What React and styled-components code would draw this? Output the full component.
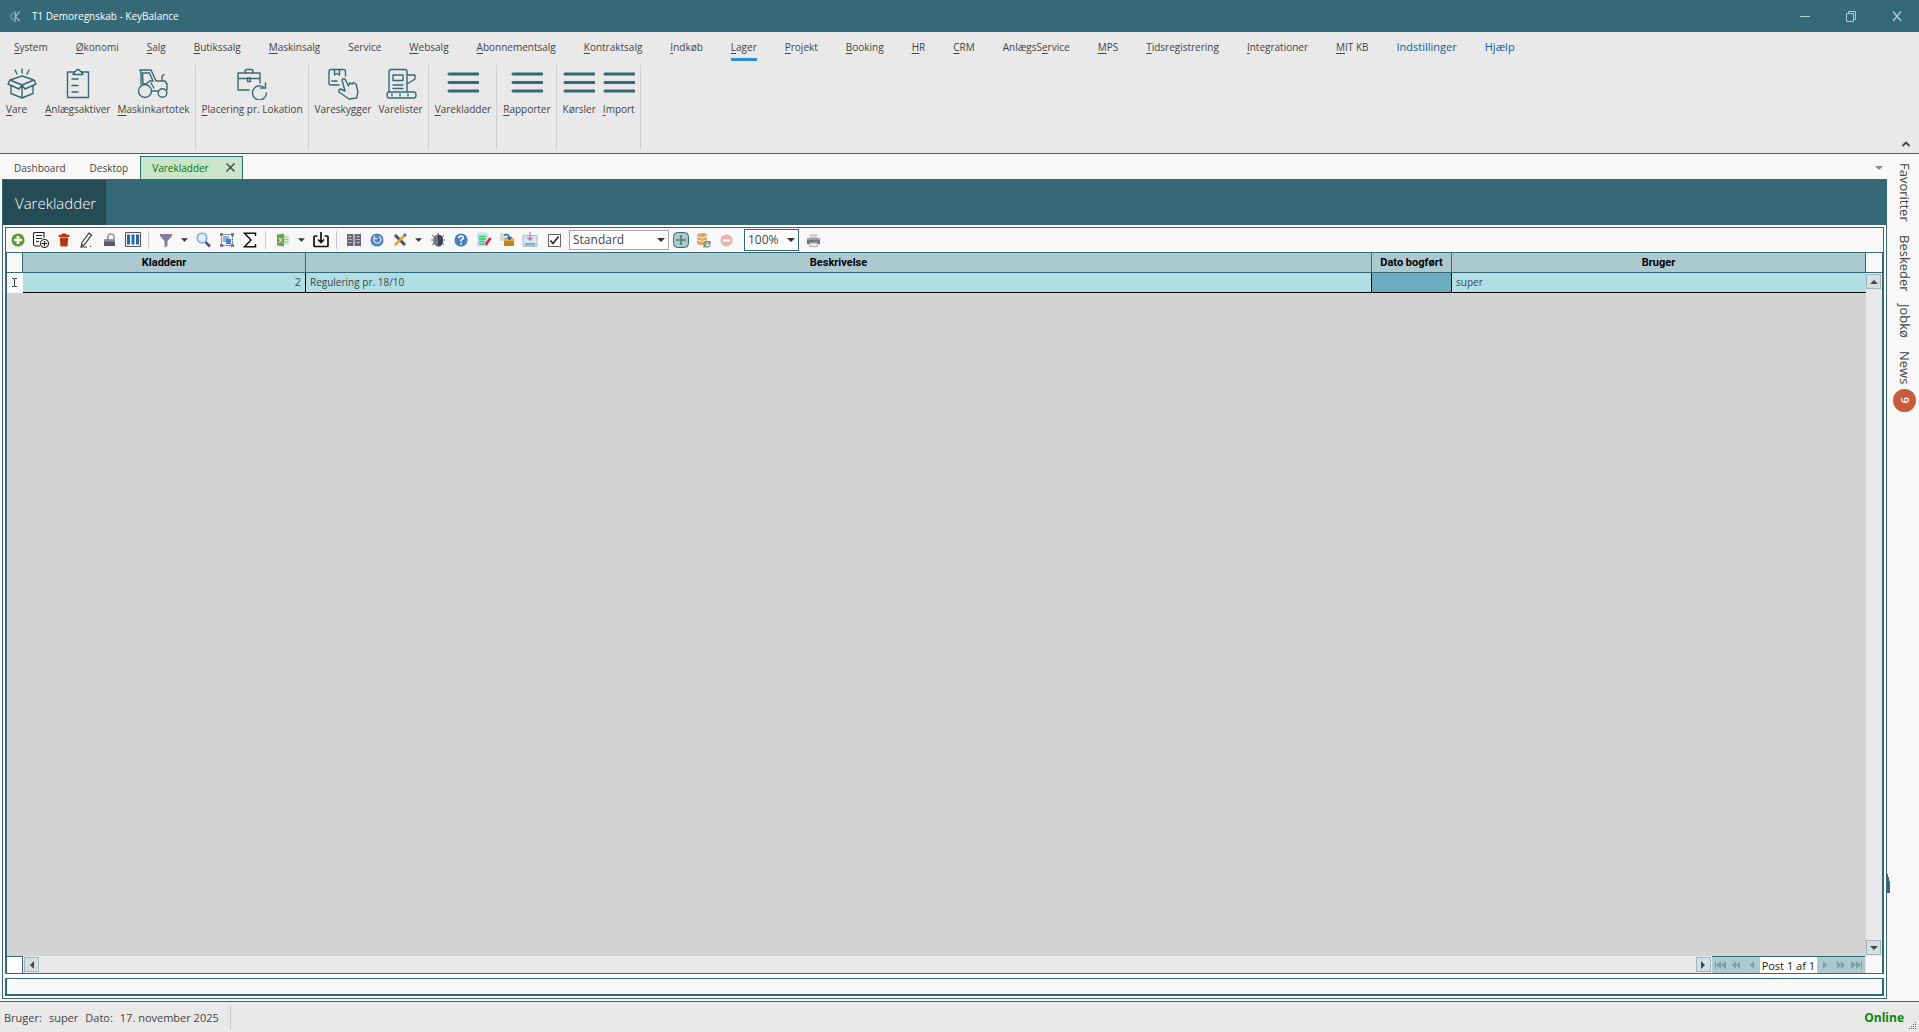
import React from "react";
import styled, { createGlobalStyle, css } from "styled-components";

const teal = "#356977";
const ink = "#444444";
const panel = "#e9e9e9";
const light = "#f8f8f8";
const headFill = "#acc9d0";
const fontStack = '"Open Sans", "Noto Sans", sans-serif';

const GlobalStyle = createGlobalStyle`
  * { box-sizing: border-box; }
  body { margin: 0; background: ${light}; color: ${ink}; font: 11px/16px ${fontStack}; }
  button, select, input { font: inherit; color: inherit; margin: 0; padding: 0; }
  button { border: 0; background: none; }
  svg { display: block; flex: none; }
`;

const Window = styled.div`
  display: flex;
  flex-direction: column;
  height: 100vh;
  overflow: hidden;
`;

const TitleBar = styled.header`
  display: flex;
  align-items: center;
  height: 32px;
  flex: none;
  padding: 0 4px 0 9px;
  gap: 10px;
  background: ${teal};
  color: #fff;
  font: 10px/16px ${fontStack};
`;
const TitleText = styled.h1`
  margin: 0;
  flex: 1;
  font: inherit;
`;
const WindowButton = styled.button`
  display: flex;
  align-items: center;
  justify-content: center;
  width: 36px;
  height: 32px;
  color: #b5cbd1;
`;

const Ribbon = styled.section`
  display: flex;
  flex-direction: column;
  flex: none;
  height: 122px;
  background: ${panel};
  border-bottom: 1px solid ${teal};
  font: 10px/16px ${fontStack};
`;
const Menu = styled.nav`
  display: flex;
  gap: 28px;
  padding: 6px 0 0 14px;
`;
const MenuItem = styled.button`
  height: 23px;
  padding-bottom: 2px;
  white-space: nowrap;
  font-size: ${(p) => (p.$blue ? 11 : 10)}px;
  color: ${(p) => (p.$blue ? "#0a5ca8" : ink)};
  border-bottom: 3px solid ${(p) => (p.$active ? "#2c8bdc" : "transparent")};
`;
const Key = styled.span`
  text-decoration: underline;
  text-underline-offset: 2px;
`;
const RibbonBody = styled.div`
  display: flex;
  flex: 1;
  padding: 4px 0;
`;
const RibbonGroup = styled.div`
  display: flex;
  gap: 7px;
  align-items: flex-start;
  padding: 3px 5px 0 6px;
  border-right: 1px solid #cdcdcd;
`;
const RibbonButton = styled.button`
  display: flex;
  flex-direction: column;
  align-items: ${(p) => (p.$start ? "flex-start" : "center")};
  min-width: 32px;
  gap: 1px;
  white-space: nowrap;
  color: ${ink};
  svg { color: ${teal}; }
`;
const Collapse = styled.button`
  align-self: flex-end;
  margin-left: auto;
  padding: 0 8px 0 0;
  color: ${ink};
`;

const Body = styled.div`
  display: flex;
  flex: 1;
  min-height: 0;
`;
const Main = styled.main`
  display: flex;
  flex-direction: column;
  flex: 1;
  min-width: 0;
  padding: 0 0 2px 2px;
`;
const Tabs = styled.div`
  display: flex;
  align-items: flex-end;
  height: 25px;
  flex: none;
  font: 10px/16px ${fontStack};
`;
const Tab = styled.button`
  display: flex;
  align-items: center;
  height: 23px;
  padding: 0 12px;
  ${(p) =>
    p.$active &&
    css`
      height: 24px;
      margin-bottom: -1px;
      padding: 0 7px 2px 11px;
      gap: 17px;
      border: 1px solid ${teal};
      border-bottom: 0;
      background: #c9e6c9;
      color: #0a6e0a;
      position: relative;
    `}
`;
const TabList = styled.button`
  margin-left: auto;
  padding: 0 4px 9px;
  color: #888;
`;
const Frame = styled.section`
  position: relative;
  display: flex;
  flex-direction: column;
  flex: 1;
  min-height: 0;
  border: 1px solid ${teal};
  background: #fff;
`;
const Band = styled.div`
  display: flex;
  height: 45px;
  flex: none;
  background: ${teal};
`;
const BandTitle = styled.h2`
  margin: 0;
  padding: 0 10px 0 12px;
  background: #254b54;
  color: #fff;
  font: 300 15px/47px ${fontStack};
`;
const Content = styled.div`
  display: flex;
  flex-direction: column;
  flex: 1;
  min-height: 0;
  margin: 2px;
`;
const Toolbar = styled.div`
  display: flex;
  align-items: center;
  height: 25px;
  flex: none;
  border: 1px solid ${teal};
  border-bottom: 0;
  background: ${light};
`;
const Tool = styled.button`
  display: flex;
  align-items: center;
  justify-content: center;
  width: ${(p) => (p.$caret ? 15 : 23)}px;
  height: 22px;
`;
const Divider = styled.span`
  width: 1px;
  height: 18px;
  margin: 0 5px 0 4px;
  background: #c8c8c8;
`;
const CheckLabel = styled.label`
  display: flex;
  align-items: center;
  justify-content: center;
  width: 23px;
  margin-left: 2px;
`;
const CheckInput = styled.input`
  appearance: none;
  width: 13px;
  height: 13px;
  border: 1px solid #666;
  background: #fff;
`;
const CheckWrap = styled.span`
  position: relative;
  display: flex;
  svg {
    position: absolute;
    left: 1px;
    top: 1px;
    pointer-events: none;
  }
`;
const Combo = styled.span`
  position: relative;
  display: flex;
  width: ${(p) => (p.$small ? 55 : 100)}px;
  height: ${(p) => (p.$small ? 22 : 20)}px;
  margin: ${(p) => (p.$small ? "0 3px 0 6px" : "0 0 0 3px")};
  select {
    appearance: none;
    width: 100%;
    padding: 0 4px 0 3px;
    border: 1px solid ${(p) => (p.$small ? teal : "#a8a8a8")};
    border-radius: 0;
    background: #fff;
    font-size: 12px;
  }
  svg {
    position: absolute;
    right: 4px;
    top: 50%;
    margin-top: -2px;
    pointer-events: none;
  }
`;

const GridBox = styled.div`
  display: grid;
  grid-template-columns: 1fr 16px;
  grid-template-rows: 1fr 17px;
  flex: 1;
  min-height: 0;
  border: 2px solid ${teal};
  border-width: 1px 2px;
`;
const Sheet = styled.div`
  min-width: 0;
  background: #d3d3d3;
`;
const Table = styled.table`
  width: 100%;
  table-layout: fixed;
  border-collapse: separate;
  border-spacing: 0;
  font-size: 10px;
  line-height: 14px;
  th, td {
    height: 20px;
    padding: 0 4px;
    overflow: hidden;
    white-space: nowrap;
  }
  th {
    background: ${headFill};
    border-right: 1px solid ${teal};
    border-bottom: 1px solid ${teal};
    color: #000;
    font: bold 11px/14px Roboto, "Open Sans", sans-serif;
  }
  th:first-child { background: ${light}; }
  td {
    padding-bottom: 2px;
    background: #afdfe4;
    border-right: 1px solid #000;
    border-bottom: 1px solid #000;
  }
  td:first-child {
    padding: 0;
    border-color: #fff;
    background: #fff;
  }
  td:last-child { border-right: 0; }
`;
const NumberCell = styled.td`
  text-align: right;
  font-size: 11px;
`;
const CurrentCell = styled.td`&& { background: #6aadc0; }`;
const VScroll = styled.div`
  display: flex;
  flex-direction: column;
  justify-content: space-between;
  align-items: flex-start;
  padding-bottom: 1px;
  background: ${panel};
`;
const HeadCorner = styled.div`
  width: 16px;
  height: 20px;
  margin-bottom: 1px;
  background: ${light};
  border-bottom: 1px solid ${teal};
`;
const ScrollButton = styled.button`
  display: flex;
  align-items: center;
  justify-content: center;
  width: 15px;
  height: 15px;
  background: #d4e0e3;
  border: 1px solid #a1b5ba;
`;
const HScroll = styled.div`
  display: flex;
  align-items: center;
  background: ${panel};
  gap: 1px;
`;
const RowCorner = styled.span`
  width: 16px;
  height: 17px;
  background: #fff;
  border: solid ${teal};
  border-width: 1px 1px 0 0;
`;
const Spacer = styled.span`flex: 1;`;
const Navigator = styled.div`
  display: flex;
  align-items: stretch;
  height: 17px;
  margin-right: 1px;
  border-top: 1px solid ${teal};
  background: ${headFill};
  color: #7f9da5;
`;
const NavButton = styled.button`
  display: flex;
  align-items: center;
  justify-content: center;
  width: 16px;
`;
const Position = styled.span`
  padding: 0 2px;
  background: #fff;
  color: #222;
  font: 11px/18px ${fontStack};
`;
const Corner = styled.div`background: ${light};`;
const MessageBox = styled.div`
  height: 18px;
  flex: none;
  margin-top: 4px;
  border: 2px solid ${teal};
  border-top-width: 1px;
  background: ${light};
`;
const Sliver = styled.svg`
  position: absolute;
  left: 100%;
  bottom: 105px;
  margin-left: 1px;
`;

const Side = styled.aside`
  display: flex;
  flex-direction: column;
  align-items: center;
  width: 32px;
  flex: none;
  padding-top: 9px;
  padding-left: 3px;
  gap: 13px;
`;
const SideButton = styled.button`
  display: flex;
  align-items: center;
  gap: 4px;
  writing-mode: vertical-rl;
  font: 13px/18px ${fontStack};
`;
const Badge = styled.span`
  display: flex;
  align-items: center;
  justify-content: center;
  width: 23px;
  height: 23px;
  border-radius: 50%;
  background: #c75b3d;
  color: #fff;
  font-size: 11px;
  font-weight: 600;
`;

const Status = styled.footer`
  display: flex;
  align-items: center;
  height: 31px;
  flex: none;
  padding-top: 1px;
  border-top: 1px solid ${teal};
  background: ${panel};
`;
const StatusText = styled.div`
  display: flex;
  align-items: center;
  gap: 7px;
  height: 24px;
  padding: 0 11px 0 4px;
  border-right: 1px solid #c8c8c8;
`;
const Online = styled.strong`
  margin-left: auto;
  padding-right: 5px;
  color: #0a850a;
  font-size: 12px;
`;
const Grip = styled.svg`align-self: flex-end; margin: 0 2px 2px 0;`;

const Icon = ({ size = 16, box = 16, children, ...rest }) => (
  <svg width={size} height={size} viewBox={`0 0 ${box} ${box}`} fill="none" stroke="currentColor" aria-hidden="true" {...rest}>
    {children}
  </svg>
);
const Caret = ({ w = 7, h = 4, color = "#333" }) => (
  <svg width={w} height={h} viewBox="0 0 8 4" aria-hidden="true"><path d="M0 0h8L4 4z" fill={color} /></svg>
);

const big = { size: 32, box: 32, strokeWidth: 1.4, strokeLinejoin: "round", strokeLinecap: "round" };
const Lines = () => (
  <Icon {...big} strokeWidth="3"><path d="M2 6h29M2 14.500h29M2 23h29" /></Icon>
);
const BoxIcon = () => (
  <Icon {...big}><path d="M16 1v4M9 2l2 4M23 2l-2 4M4 12l12-4 12 4-12 5zM4 12l-2 4 11 5 3-4 3 4 11-5-2-4M5 17.500v8l11 4.500 11-4.500v-8M16 17v13" /></Icon>
);
const ClipboardIcon = () => (
  <Icon {...big}><path d="M12 4H5.500v25.500h21V4H20M11 6.500l2-3c1.500 0 1-2 3-2s1.500 2 3 2l2 3zM10 11h6M10 17.500h6M10 24h6" /></Icon>
);
const TractorIcon = () => (
  <Icon {...big}><circle cx="8" cy="23" r="6.500" /><circle cx="25.500" cy="25" r="4.300" /><path d="M3 2h11l5 11h9l2 3v6M3 2l1 3v11M5.500 5h7l3.500 8h-3.500L9 16H6zM15 23h6M25 13V8.500l2-2M14 15l3 5" /></Icon>
);
const CaseIcon = () => (
  <Icon {...big}><path d="M13 22H2V5h22v10M2 10.500h22M9 5V3q0-1.500 1.500-1.500h5Q17 1.500 17 3v2M11.500 10h3v3.500h-3zM28 19.500A7 7 0 1 0 30.500 25M29.500 15v5h-5" /></Icon>
);
const HandIcon = () => (
  <Icon {...big}><path d="M12 17H4q-2 0-2-2V3.500q0-2 2-2h12.500q2 0 2 2V8M7.500 1.500V7l2.500-1.500L12.500 7V1.500M5 13h5M15 12q2-3 4 1l2.500 5 1-3 3 1 1-1.500 2.500 1.500 2 8-1.500 6-7.500 1-10-7q-1-2.500 1.500-3l4.500 2z" /></Icon>
);
const MachineIcon = () => (
  <Icon {...big}><path d="M4 24V3.500q0-2 2-2h14q2 0 2 2V24M8 7h10v5.500H8zM8 17h10M8 20.500h10M22 7h8v4l-8 5M4 24h25q2 0 2 3t-2 3H4q-2 0-2-3t2-3zM7 26v2M15 26v2M23 26v2" /></Icon>
);

const PlusIcon = () => (
  <Icon size="14"><circle cx="8" cy="8" r="7.500" fill="#5d9b33" stroke="none" /><path d="M8 3.500v9M3.500 8h9" stroke="#fff" strokeWidth="3" /></Icon>
);
const DocAddIcon = () => (
  <Icon stroke="#222" strokeWidth="1.100"><path d="M7 14H2q-1.500 0-1.500-1.500V2Q.500.500 2 .500h9V6M3 3.500h6M3 6.500h6M3 9.500h3" /><circle cx="11.500" cy="11.500" r="4" /><path d="M11.500 9v5M9 11.500h5" /></Icon>
);
const TrashIcon = () => (
  <Icon size="14" stroke="none"><path d="M2 2h3.500V.500h5V2H14v2.500H2z" fill="#b8330c" /><path d="M3 5h10l-1 10.500H4z" fill="#c84418" /><path d="M5.500 6v8M8 6v8M10.500 6v8" stroke="#8d2608" /></Icon>
);
const PenIcon = () => (
  <Icon stroke="#333" strokeWidth="1.200"><path d="M3 10.500L10 1l2.500 2-7 9.500L2.500 14zM1 15h7M11 14.500h1" /></Icon>
);
const LockIcon = () => (
  <Icon stroke="none"><path d="M6 8V5q0-3 3-3t3 3v2" stroke="#aaa" strokeWidth="2" /><path d="M2 7.500h11V14H2z" fill="#5b5b68" /><path d="M2 7.500h11v2H2z" fill="#9393a0" /></Icon>
);
const ColumnsIcon = () => (
  <Icon stroke="#555"><path d="M.500.500h15v14H.500z" fill="#f4f7fa" /><path d="M3.500 2.500v10M8 2.500v10M12.500 2.500v10" stroke="#2f66a3" strokeWidth="3" /></Icon>
);
const FunnelIcon = () => <Icon stroke="none"><path d="M2 2h12v2L9.500 9v5l-3 1.500V9L2 4z" fill="#857aa0" /></Icon>;
const SearchIcon = () => (
  <Icon><path d="M9.500 10l4.500 4.500" stroke="#50505e" strokeWidth="2.500" /><circle cx="6" cy="6" r="4.700" fill="#e4f0ff" stroke="#7ba7dc" strokeWidth="1.600" /></Icon>
);
const GroupIcon = () => (
  <Icon stroke="#60618c"><path d="M2.500 2.500h11v11h-11z" strokeDasharray="2 1" /><path d="M1 1h3v3H1zM12 1h3v3h-3zM1 12h3v3H1zM12 12h3v3h-3z" fill="#77789b" stroke="none" /><path d="M4 4h6v6H4z" fill="#8fb1ea" stroke="none" /><path d="M7 7h5v5H7z" fill="#477fd0" stroke="none" /></Icon>
);
const SigmaIcon = () => <Icon stroke="#111" strokeWidth="1.500"><path d="M13.500 4V1.200H2.500L9 8l-6.500 6.800h11V12" /></Icon>;
const ExcelIcon = () => (
  <Icon stroke="none"><path d="M8 3h6v10H8z" fill="#dce9d2" /><path d="M9 5h4M9 7.500h4M9 10h4" stroke="#a9c598" /><path d="M2 2.500l7-1v13l-7-1z" fill="#6fa14f" /><path d="M4 6l3 4.500M7 6l-3 4.500" stroke="#e7f3df" /></Icon>
);
const DownloadIcon = () => (
  <Icon stroke="#111" strokeWidth="1.700"><path d="M4.500 4H2Q1 4 1 5v8.500q0 1 1 1h12q1 0 1-1V5q0-1-1-1h-2.500M8 0v10M5 7.500l3 3 3-3" /></Icon>
);
const BookIcon = () => (
  <Icon stroke="none"><path d="M1 2h6.500v12H1zM8.500 2H15v12H8.500z" fill="#6d697c" /><path d="M2 4.500h4M2 7.500h4M2 10.500h4M10 4.500h4M10 7.500h4M10 10.500h4" stroke="#b5b2bf" /></Icon>
);
const RefreshIcon = () => (
  <Icon size="14"><circle cx="8" cy="8" r="7.500" fill="#4e86c4" stroke="none" /><path d="M5 5.500a4 4 0 1 0 5-1.500M5 3v3.500h3.500" stroke="#d5e5f7" strokeWidth="1.500" /></Icon>
);
const ToolsIcon = () => (
  <Icon><path d="M3 3l10 10" stroke="#4d4d5b" strokeWidth="2.800" /><path d="M13 3L3 13" stroke="#dba43d" strokeWidth="2.500" /><path d="M12 4l2-2" stroke="#757585" strokeWidth="3" /></Icon>
);
const BugIcon = () => (
  <Icon><path d="M2 3l3 3M14 3l-3 3M1 8h14M2 13l3-3M14 13l-3-3M8 1v3" stroke="#666" /><ellipse cx="8" cy="8.500" rx="5" ry="6" fill="#77778a" stroke="none" /><path d="M8 2.500q5 0 5 6t-5 6z" fill="#3f3f54" stroke="none" /></Icon>
);
const HelpIcon = () => (
  <Icon size="14"><circle cx="8" cy="8" r="7.500" fill="#4a7fbd" stroke="none" /><path d="M5.500 6q0-2.500 2.500-2.500T10.500 6Q10.500 7 8 8.500v1.300M8 11v2" stroke="#fff" strokeWidth="1.800" /></Icon>
);
const EditDocIcon = () => (
  <Icon stroke="none"><path d="M1 .500h9L12.500 3v11.500H1z" fill="#bfe9f2" /><path d="M3 4.500h7M3 7h7M3 9.500h6M3 12h5" stroke="#36c85e" strokeWidth="1.500" /><path d="M9.500 13l5-7" stroke="#e0263b" strokeWidth="2.600" /></Icon>
);
const PackageIcon = () => (
  <Icon stroke="none"><path d="M1 1h6v8H1z" fill="#d5d8df" /><path d="M5 8h10v6H5z" fill="#c28222" /><path d="M4.500 7.500l2-2h7l2 2-1 1.500h-9z" fill="#e5ad50" /><path d="M5 3q5-1.500 5.500 3M8.500 5l2 2.500 2-2.500" stroke="#346dac" strokeWidth="1.700" /></Icon>
);
const InboxIcon = () => (
  <Icon><path d="M1 3.500h14v11H1z" fill="#d4e5f5" stroke="#a7b7dc" /><path d="M3 11h10v2.500H3z" fill="#74b9a4" stroke="none" /><path d="M8 0v8M5.500 5.500L8 8l2.500-2.500" stroke="#b184ae" strokeWidth="1.300" /></Icon>
);
const AddViewIcon = () => (
  <Icon stroke={teal}><rect x=".500" y=".500" width="15" height="15" rx="4" fill="#acc9d0" /><path d="M8 3v10M3 8h10" stroke="#4c8577" strokeWidth="1.700" /></Icon>
);
const DatabaseIcon = () => (
  <Icon stroke="none"><path d="M1 3q0-2 5-2t5 2v8q0 2-5 2t-5-2z" fill="#dda767" /><path d="M1 4.500q5 3 10 0M1 8q5 3 10 0" stroke="#fff0d9" /><path d="M8 11.500q1-2.500 4-2l2 1.500M14 13q-1 2.500-4 2l-2-1.500M14 9v2.500h-2.500M8 15.500V13h2.500" stroke="#629783" strokeWidth="1.300" /></Icon>
);
const MinusIcon = () => (
  <Icon size="13"><circle cx="8" cy="8" r="7.500" fill="#e4b5aa" stroke="none" /><path d="M3.500 8h9" stroke="#fff" strokeWidth="2.500" /></Icon>
);
const PrinterIcon = () => (
  <Icon size="15" stroke="none"><path d="M4 1h8v5H4z" fill="#d2d2d8" /><path d="M1 5.500h14V12H1z" fill="#777784" /><path d="M1 5.500h14v2H1z" fill="#a0a0ac" /><path d="M4 10.500h8v4H4z" fill="#ededf2" stroke="#a5a5ad" /></Icon>
);

// An underscore marks the access key that follows it.
const Label = ({ text }) => {
  const at = text.indexOf("_");
  if (at < 0) return <span>{text}</span>;
  return <span>{text.slice(0, at)}<Key>{text[at + 1]}</Key>{text.slice(at + 2)}</span>;
};

const menu = ["_System", "_Økonomi", "_Salg", "_Butikssalg", "_Maskinsalg", "Service", "_Websalg", "_Abonnementsalg", "_Kontraktsalg", "_Indkøb", "_Lager", "_Projekt", "_Booking", "_HR", "_CRM", "AnlægsS_ervice", "_MPS", "_Tidsregistrering", "_Integrationer", "_MIT KB"];
const groups = [
  [["_Vare", BoxIcon, true], ["_Anlægsaktiver", ClipboardIcon], ["_Maskinkartotek", TractorIcon]],
  [["_Placering pr. Lokation", CaseIcon]],
  [["Vareskygger", HandIcon], ["Varelister", MachineIcon]],
  [["_Varekladder", Lines]],
  [["_Rapporter", Lines]],
  [["Kørsler", Lines], ["_Import", Lines]],
];
const tools = [
  ["Ny", PlusIcon], ["Kopier", DocAddIcon], ["Slet", TrashIcon], ["Rediger", PenIcon], ["Lås", LockIcon], ["Kolonner", ColumnsIcon], null,
  ["Filter", FunnelIcon], ["Filtervalg", Caret, true], ["Søg", SearchIcon], ["Gruppér", GroupIcon], ["Sum", SigmaIcon], null,
  ["Excel", ExcelIcon], ["Excelvalg", Caret, true], ["Hent", DownloadIcon], null,
  ["Opslag", BookIcon], ["Opdater", RefreshIcon], ["Værktøjer", ToolsIcon], ["Værktøjsvalg", Caret, true],
  ["Fejlsøg", BugIcon], ["Hjælp", HelpIcon], ["Notat", EditDocIcon], ["Pakke", PackageIcon], ["Importér", InboxIcon],
];

const Tri = ({ d }) => <svg width="14" height="10" viewBox="0 0 14 10" aria-hidden="true"><path d={d} fill="currentColor" /></svg>;

export default function App() {
  return (
    <Window>
      <GlobalStyle />
      <TitleBar>
        <Icon size="13" stroke="#9fbcc4" strokeWidth="1.600"><path d="M5 3L2 8l3 5" opacity=".6" /><path d="M7.500 1.500v13M13 2L8 8l5 6" /></Icon>
        <TitleText>T1 Demoregnskab - KeyBalance</TitleText>
        <WindowButton aria-label="Minimer"><Icon size="12" box="12"><path d="M1 6.500h10" /></Icon></WindowButton>
        <WindowButton aria-label="Gendan"><Icon size="12" box="12"><path d="M1.500 3.500h7v8h-7zM3.500 3V1.500h7v8H9" /></Icon></WindowButton>
        <WindowButton aria-label="Luk"><Icon size="12" box="12" strokeWidth="1.300"><path d="M2 1.500l8 9.500M10 1.500L2 11" /></Icon></WindowButton>
      </TitleBar>

      <Ribbon>
        <Menu>
          {menu.map((m) => <MenuItem key={m} $active={m === "_Lager"}><Label text={m} /></MenuItem>)}
          <MenuItem $blue>Indstillinger</MenuItem>
          <MenuItem $blue>Hjælp</MenuItem>
        </Menu>
        <RibbonBody>
          {groups.map((items, i) => (
            <RibbonGroup key={i}>
              {items.map(([text, Pic, start]) => (
                <RibbonButton key={text} $start={start}><Pic /><Label text={text} /></RibbonButton>
              ))}
            </RibbonGroup>
          ))}
          <Collapse aria-label="Skjul bånd"><Icon size="10" box="10" strokeWidth="1.800"><path d="M1.500 7L5 3.500 8.500 7" /></Icon></Collapse>
        </RibbonBody>
      </Ribbon>

      <Body>
        <Main>
          <Tabs>
            <Tab>Dashboard</Tab>
            <Tab>Desktop</Tab>
            <Tab $active>Varekladder<Icon size="9" box="9" stroke={ink} strokeWidth="1.400"><path d="M.500.500l8 8M8.500.500l-8 8" /></Icon></Tab>
            <TabList aria-label="Faneliste"><Caret w={8} color="#888" /></TabList>
          </Tabs>
          <Frame>
            <Band><BandTitle>Varekladder</BandTitle></Band>
            <Content>
              <Toolbar>
                {tools.map((t, i) => {
                  if (!t) return <Divider key={i} />;
                  const [name, Pic, caret] = t;
                  return <Tool key={name} aria-label={name} $caret={caret}><Pic /></Tool>;
                })}
                <CheckLabel>
                  <CheckWrap>
                    <CheckInput type="checkbox" defaultChecked aria-label="Vis layout" />
                    <Icon size="11" box="11" stroke="#222" strokeWidth="1.600"><path d="M1.500 5.500L4 8.500l5.500-7" /></Icon>
                  </CheckWrap>
                </CheckLabel>
                <Combo><select aria-label="Layout" defaultValue="Standard"><option>Standard</option></select><Caret w={8} /></Combo>
                <Tool aria-label="Tilføj layout"><AddViewIcon /></Tool>
                <Tool aria-label="Opdater layout"><DatabaseIcon /></Tool>
                <Tool aria-label="Fjern layout"><MinusIcon /></Tool>
                <Combo $small><select aria-label="Zoom" defaultValue="100%"><option>100%</option></select><Caret w={8} /></Combo>
                <Tool aria-label="Udskriv"><PrinterIcon /></Tool>
              </Toolbar>
              <GridBox>
                <Sheet>
                  <Table>
                    <colgroup>
                      <col width="16" /><col width="283" /><col /><col width="80" /><col width="414" />
                    </colgroup>
                    <thead>
                      <tr><th aria-label="Række" /><th>Kladdenr</th><th>Beskrivelse</th><th>Dato bogført</th><th>Bruger</th></tr>
                    </thead>
                    <tbody>
                      <tr>
                        <td><Icon size="15" box="15" stroke="#333"><path d="M5 3.500h2l.500.500.500-.500h2M7.500 4v7M5 11.500h2l.500-.500.500.500h2" /></Icon></td>
                        <NumberCell>2</NumberCell><td>Regulering pr. 18/10</td><CurrentCell /><td>super</td>
                      </tr>
                    </tbody>
                  </Table>
                </Sheet>
                <VScroll>
                  <div>
                    <HeadCorner />
                    <ScrollButton aria-label="Op"><Tri d="M7 3l4 4H3z" /></ScrollButton>
                  </div>
                  <ScrollButton aria-label="Ned"><Tri d="M7 7l4-4H3z" /></ScrollButton>
                </VScroll>
                <HScroll>
                  <RowCorner />
                  <ScrollButton aria-label="Venstre"><Tri d="M5 5l4-4v8z" /></ScrollButton>
                  <Spacer />
                  <ScrollButton aria-label="Højre"><Tri d="M9 5L5 1v8z" /></ScrollButton>
                  <Navigator>
                    <NavButton aria-label="Første"><Tri d="M2 1h1v8H2zM3 5l5-4v8zM8 5l5-4v8z" /></NavButton>
                    <NavButton aria-label="Forrige side"><Tri d="M3 5l4-4v8zM7 5l4-4v8z" /></NavButton>
                    <NavButton aria-label="Forrige"><Tri d="M5 5l4-4v8z" /></NavButton>
                    <Position>Post 1 af 1</Position>
                    <NavButton aria-label="Næste"><Tri d="M9 5L5 1v8z" /></NavButton>
                    <NavButton aria-label="Næste side"><Tri d="M7 5L3 1v8zM11 5L7 1v8z" /></NavButton>
                    <NavButton aria-label="Sidste"><Tri d="M6 5L1 1v8zM11 5L6 1v8zM11 1h1v8h-1z" /></NavButton>
                  </Navigator>
                </HScroll>
                <Corner />
              </GridBox>
              <MessageBox />
            </Content>
            <Sliver width="3" height="20" viewBox="0 0 3 20" aria-hidden="true"><path d="M0 1h1v3h1v4h1v12H0z" fill={teal} /></Sliver>
          </Frame>
        </Main>
        <Side>
          <SideButton>Favoritter</SideButton>
          <SideButton>Beskeder</SideButton>
          <SideButton>Jobkø</SideButton>
          <SideButton>News<Badge>9</Badge></SideButton>
        </Side>
      </Body>

      <Status>
        <StatusText><span>Bruger:</span><span>super</span><span>Dato:</span><span>17. november 2025</span></StatusText>
        <Online>Online</Online>
        <Grip width="8" height="8" viewBox="0 0 8 8" aria-hidden="true">
          <path d="M6 0h1v1H6zM4 2h1v1H4zM6 2h1v1H6zM2 4h1v1H2zM4 4h1v1H4zM6 4h1v1H6zM0 6h1v1H0zM2 6h1v1H2zM4 6h1v1H4zM6 6h1v1H6z" fill="#666" />
        </Grip>
      </Status>
    </Window>
  );
}
